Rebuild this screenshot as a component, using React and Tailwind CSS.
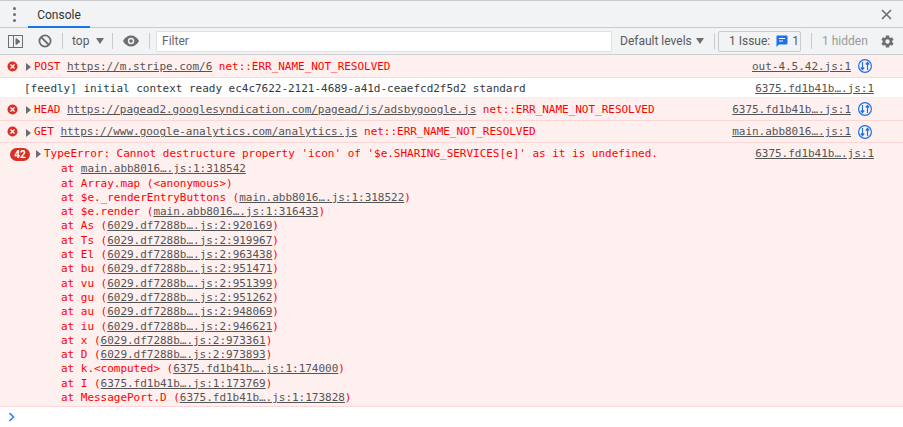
import React from "react";

const mono = "font-['DejaVu_Sans_Mono',monospace] text-[11px] tracking-[-0.022px]";

const ErrorIcon = () => (
  <svg width="11" height="11" viewBox="0 0 11 11" className="shrink-0">
    <circle cx="5.5" cy="5.5" r="5" fill="#d93025" />
    <path d="M3.500 3.500l4 4M7.500 3.500l-4 4" stroke="#fff" strokeWidth="1.300" />
  </svg>
);

const Arrow = () => (
  <span className="w-0 h-0 border-y-[4px] border-y-transparent border-l-[5px] border-l-[#6e6e6e] shrink-0" />
);

const Upload = () => (
  <svg width="14" height="14" viewBox="0 0 14 14" fill="none" stroke="#1a73e8" strokeWidth="1.200" className="shrink-0">
    <circle cx="7" cy="7" r="6.400" />
    <path d="M4.500 3v7.500M2.800 8.500l1.700 2 1.700-2M9.500 11V3.500M7.800 5.500l1.700-2 1.700 2" />
  </svg>
);

const Link = ({ children }) => <span className="underline text-[#545454]">{children}</span>;

const Sep = ({ className }) => <span className={`w-px h-[16px] bg-[#c9cbce] shrink-0 ${className}`} />;

const stack = [
  ["at ", "main.abb8016….js:1:318542", false],
  ["at Array.map (<anonymous>)", null, false],
  ["at $e._renderEntryButtons (", "main.abb8016….js:1:318522", true],
  ["at $e.render (", "main.abb8016….js:1:316433", true],
  ["at As (", "6029.df7288b….js:2:920169", true],
  ["at Ts (", "6029.df7288b….js:2:919967", true],
  ["at El (", "6029.df7288b….js:2:963438", true],
  ["at bu (", "6029.df7288b….js:2:951471", true],
  ["at vu (", "6029.df7288b….js:2:951399", true],
  ["at gu (", "6029.df7288b….js:2:951262", true],
  ["at au (", "6029.df7288b….js:2:948069", true],
  ["at iu (", "6029.df7288b….js:2:946621", true],
  ["at x (", "6029.df7288b….js:2:973361", true],
  ["at D (", "6029.df7288b….js:2:973893", true],
  ["at k.<computed> (", "6375.fd1b41b….js:1:174000", true],
  ["at I (", "6375.fd1b41b….js:1:173769", true],
  ["at MessagePort.D (", "6375.fd1b41b….js:1:173828", true],
];

const NetRow = ({ method, url, source, height }) => (
  <div className={`${mono} ${height} pt-[2px] flex items-center bg-[#fff0f0] border-b border-[#ffd6d6] text-[#ff0000] shrink-0`}>
    <div className="w-[26px] pl-[7px] mb-[2px] shrink-0 flex">
      <ErrorIcon />
    </div>
    <Arrow />
    <span className="ml-[3px]">{method}&nbsp;</span>
    <Link>{url}</Link>
    <span>&nbsp;net::ERR_NAME_NOT_RESOLVED</span>
    <span className="ml-auto mr-[7px]">
      <Link>{source}</Link>
    </span>
    <div className="mr-[31px] mb-[2px] flex">
      <Upload />
    </div>
  </div>
);

const App = () => {
  return (
    <div className="w-[903px] h-[427px] bg-white overflow-hidden flex flex-col font-['Roboto',sans-serif] text-[12px] text-[#5a5a5a]">
      {/* Tabs */}
      <div className="h-[28px] shrink-0 bg-[#f1f3f4] border-t border-[#c8cacd] border-b flex items-center">
        <div className="w-[28px] pl-[1px] flex flex-col items-center gap-[3px]">
          <span className="w-[3px] h-[3px] rounded-full bg-[#6e6e6e]" />
          <span className="w-[3px] h-[3px] rounded-full bg-[#6e6e6e]" />
          <span className="w-[3px] h-[3px] rounded-full bg-[#6e6e6e]" />
        </div>
        <div className="relative h-full w-[62px] pt-[1px] flex items-center justify-center text-[#333]">
          Console
          <span className="absolute left-0 right-0 bottom-[-1px] h-[2px] bg-[#1a73e8]" />
        </div>
        <svg width="11" height="11" viewBox="0 0 11 11" className="ml-auto mr-[11px]" stroke="#6e6e6e" strokeWidth="1.600">
          <path d="M1 1l9 9M10 1l-9 9" />
        </svg>
      </div>

      {/* Toolbar */}
      <div className="h-[27px] shrink-0 bg-[#f1f3f4] border-b border-[#cdcfd2] flex items-center">
        <svg width="15" height="13" viewBox="0 0 15 13" fill="none" stroke="#6e6e6e" className="ml-[8px] shrink-0">
          <rect x="0.500" y="0.500" width="14" height="12" />
          <path d="M5.500 0.500v12" />
          <path d="M8 3.500l4 3-4 3z" fill="#6e6e6e" />
        </svg>
        <svg width="14" height="14" viewBox="0 0 14 14" fill="none" stroke="#6e6e6e" strokeWidth="1.800" className="ml-[15px] shrink-0">
          <circle cx="7" cy="7" r="5.600" />
          <path d="M3 3l8 8" />
        </svg>
        <Sep className="ml-[10px]" />
        <span className="ml-[9px] w-[24px]">top</span>
        <span className="w-0 h-0 border-x-[4px] border-x-transparent border-t-[6px] border-t-[#6e6e6e]" />
        <Sep className="ml-[8px]" />
        <svg width="16" height="12" viewBox="0 0 16 12" className="ml-[10px] shrink-0">
          <path d="M0 6c2-3.600 4.800-5.500 8-5.500s6 1.900 8 5.500c-2 3.600-4.800 5.500-8 5.500S2 9.600 0 6z" fill="#6e6e6e" />
          <circle cx="8" cy="6" r="3.200" fill="#f1f3f4" />
          <circle cx="8" cy="6" r="1.800" fill="#6e6e6e" />
        </svg>
        <Sep className="ml-[10px]" />
        <div className="ml-[6px] w-[456px] h-[21px] shrink-0 bg-white border border-[#dfe1e5] flex items-center pl-[5px] text-[#666]">
          Filter
        </div>
        <span className="ml-[8px] w-[76px] whitespace-nowrap">Default levels</span>
        <span className="w-0 h-0 border-x-[4px] border-x-transparent border-t-[6px] border-t-[#6e6e6e]" />
        <Sep className="ml-[10px]" />
        <div className="ml-[3px] w-[83px] h-[21px] shrink-0 border border-[#c9cbce] rounded-[2px] pl-[10px] flex items-center gap-[6px] whitespace-nowrap">
          1 Issue:
          <span className="flex items-center gap-[4px]">
            <svg width="12" height="12" viewBox="0 0 12 12">
              <path d="M1.500 0.500h9a1 1 0 0 1 1 1v7a1 1 0 0 1-1 1H3l-2.500 2.500v-10.500a1 1 0 0 1 1-1z" fill="#1a73e8" />
              <path d="M3 3.500h6M3 6h4" stroke="#fff" />
            </svg>
            1
          </span>
        </div>
        <Sep className="ml-[10px]" />
        <span className="ml-[10px] w-[58px] text-[#9a9a9a] whitespace-nowrap">1 hidden</span>
        <svg width="15" height="15" viewBox="0 0 24 24" fill="#6e6e6e" className="shrink-0">
          <path d="M19.400 13a7.500 7.500 0 0 0 0-2l2.300-1.700-2.300-4-2.600 1.100a7.500 7.500 0 0 0-1.800-1L14.600 2.500H9.400L9 5.400a7.500 7.500 0 0 0-1.800 1L4.600 5.300l-2.300 4L4.600 11a7.500 7.500 0 0 0 0 2l-2.300 1.700 2.300 4 2.600-1.100c.6.400 1.100.7 1.800 1l.4 2.900h5.200l.4-2.900c.7-.3 1.200-.6 1.800-1l2.600 1.100 2.300-4zM12 15.500a3.500 3.500 0 1 1 0-7 3.500 3.500 0 0 1 0 7z" />
        </svg>
      </div>

      {/* Messages */}
      <NetRow height="h-[23px]" method="POST" url="https://m.stripe.com/6" source="out-4.5.42.js:1" />
      <div className={`${mono} h-[20px] pt-[3px] shrink-0 flex items-center border-b border-[#f0f0f0] pl-[24px] pr-[29px] text-[#303942]`}>
        [feedly] initial context ready ec4c7622-2121-4689-a41d-ceaefcd2f5d2 standard
        <span className="ml-auto">
          <Link>6375.fd1b41b….js:1</Link>
        </span>
      </div>
      <NetRow height="h-[23px]" method="HEAD" url="https://pagead2.googlesyndication.com/pagead/js/adsbygoogle.js" source="6375.fd1b41b….js:1" />
      <NetRow height="h-[22px]" method="GET" url="https://www.google-analytics.com/analytics.js" source="main.abb8016….js:1" />

      <div className={`${mono} h-[264px] shrink-0 bg-[#fff0f0] border-b border-[#ffd6d6] text-[#ff0000] pt-[4px] leading-[14.3px]`}>
        <div className="flex items-center mb-[1px]">
          <span className="ml-[10px] w-[20px] h-[13px] rounded-full bg-[#d93025] text-white font-bold text-[10px] leading-[13px] text-center font-['Roboto',sans-serif] shrink-0">
            42
          </span>
          <span className="ml-[6px] flex">
            <Arrow />
          </span>
          <span className="ml-[3px]">TypeError: Cannot destructure property 'icon' of '$e.SHARING_SERVICES[e]' as it is undefined.</span>
          <span className="ml-auto mr-[29px]">
            <Link>6375.fd1b41b….js:1</Link>
          </span>
        </div>
        {stack.map(([text, link, close], i) => (
          <div key={i} className="pl-[61px] whitespace-pre">
            {text}
            {link && <Link>{link}</Link>}
            {close && ")"}
          </div>
        ))}
      </div>

      {/* Prompt */}
      <div className="pl-[8px] pt-[5px]">
        <svg width="8" height="10" viewBox="0 0 8 10" fill="none" stroke="#367cf1" strokeWidth="1.600">
          <path d="M1.500 1l4 4-4 4" />
        </svg>
      </div>
    </div>
  );
};

export default App;
